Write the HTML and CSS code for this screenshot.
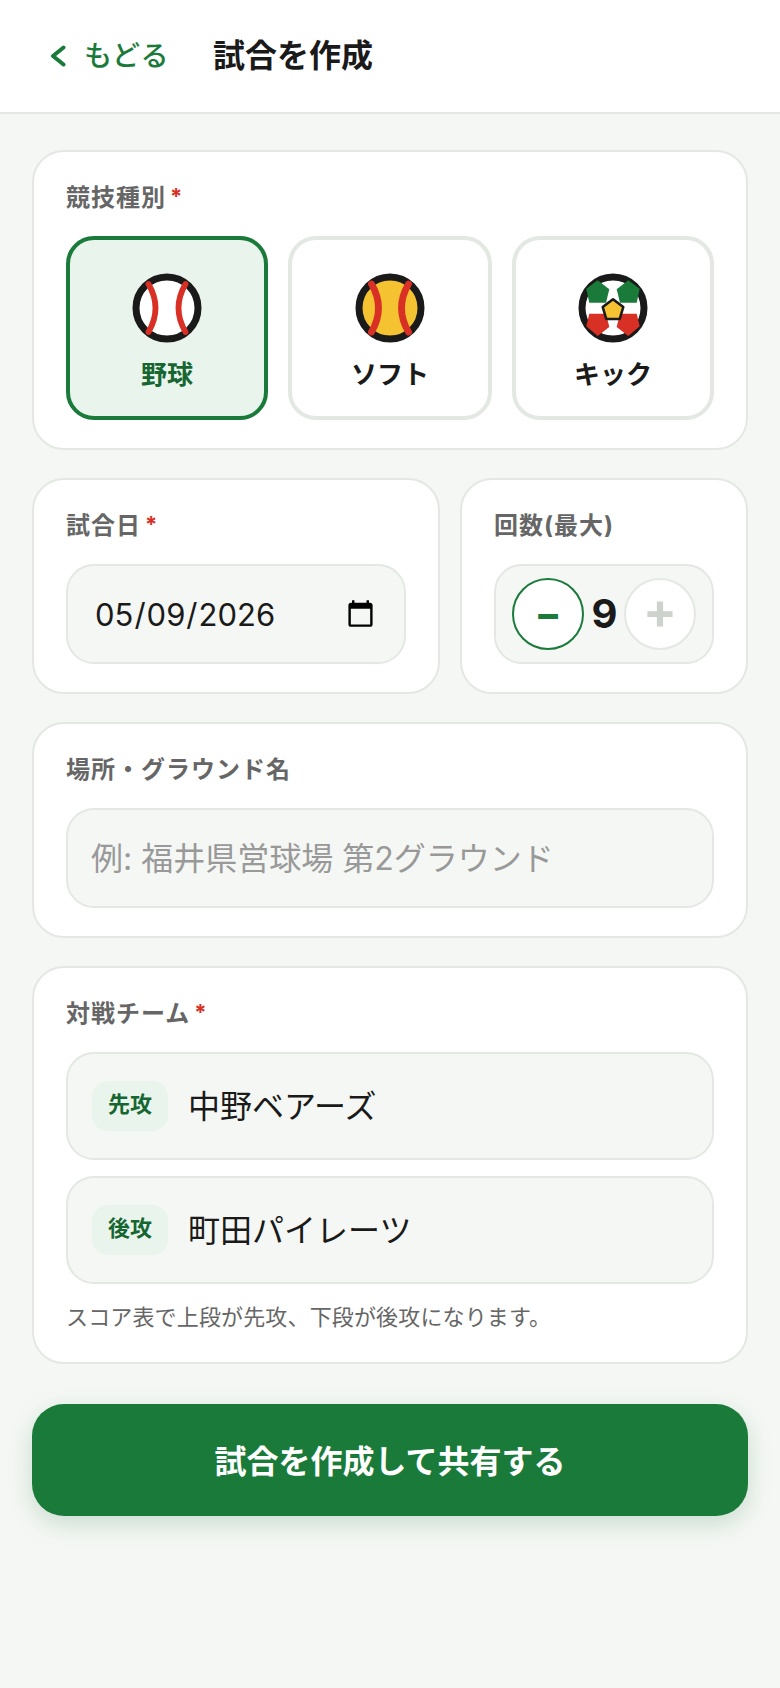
FILE: index.html
```html
<!DOCTYPE html>
<html lang="ja">
<head>
<meta charset="utf-8">
<title>試合を作成</title>
<link rel="stylesheet" href="styles.css">
</head>
<body>
<header class="topbar">
  <a class="back" href="#">
    <svg class="back-icon" viewBox="0 0 16 22" aria-hidden="true"><path d="M13.5 2.5 L3 11 L13.5 19.5"/></svg>
    <span>もどる</span>
  </a>
  <h1 class="title">試合を作成</h1>
</header>
<main class="form">
  <section class="card">
    <div class="label">競技種別<span class="req">*</span></div>
    <div class="sports">
      <button class="tile tile-on" type="button">
        <svg class="ball" viewBox="0 0 70 70" aria-hidden="true">
          <circle class="ring fill-white" cx="35" cy="35" r="31"/>
          <path class="seam" d="M16.5 11 Q30.5 35 16.5 59"/>
          <path class="seam" d="M53.5 11 Q39.5 35 53.5 59"/>
        </svg>
        <span>野球</span>
      </button>
      <button class="tile" type="button">
        <svg class="ball" viewBox="0 0 70 70" aria-hidden="true">
          <circle class="ring fill-yellow" cx="35" cy="35" r="31"/>
          <path class="seam seam-b" d="M16.5 11 Q30.5 35 16.5 59"/>
          <path class="seam seam-b" d="M53.5 11 Q39.5 35 53.5 59"/>
        </svg>
        <span>ソフト</span>
      </button>
      <button class="tile" type="button">
        <svg class="ball" viewBox="0 0 70 70" aria-hidden="true">
          <circle class="ring fill-white" cx="35" cy="35" r="31"/>
          <polygon class="pent-green" points="19.7,7.3 31.3,16.3 28,29.7 11.3,29.7 8.3,15.7"/>
          <polygon class="pent-green" points="50.3,7.3 38.7,16.3 42,29.7 58.7,29.7 61.7,15.7"/>
          <polygon class="pent-red" points="11.3,40.7 28,40.7 31.3,54 19.7,63 8.3,53.3"/>
          <polygon class="pent-red" points="58.7,40.7 42,40.7 38.7,54 50.3,63 61.7,53.3"/>
          <polygon class="pent-core" points="35,26.3 45.3,34 41.7,46 28.3,46 24.7,34"/>
        </svg>
        <span>キック</span>
      </button>
    </div>
  </section>

  <div class="row">
    <section class="card card-grow">
      <label class="label" for="date">試合日<span class="req">*</span></label>
      <input id="date" class="field field-date" type="date" value="2026-05-09">
    </section>
    <section class="card">
      <div class="label">回数(最大)</div>
      <div class="stepper">
        <button class="step step-on" type="button">−</button>
        <span class="count">9</span>
        <button class="step step-off" type="button">+</button>
      </div>
    </section>
  </div>

  <section class="card">
    <label class="label" for="place">場所・グラウンド名</label>
    <input id="place" class="field field-place" type="text" placeholder="例: 福井県営球場 第2グラウンド">
  </section>

  <section class="card">
    <div class="label">対戦チーム<span class="req">*</span></div>
    <div class="teams">
      <div class="team">
        <span class="badge">先攻</span>
        <input class="team-input" type="text" value="中野ベアーズ">
      </div>
      <div class="team">
        <span class="badge">後攻</span>
        <input class="team-input" type="text" value="町田パイレーツ">
      </div>
    </div>
    <p class="note">スコア表で上段が先攻、下段が後攻になります。</p>
  </section>

  <button class="submit" type="button">試合を作成して共有する</button>
</main>
</body>
</html>
```
FILE: styles.css
```css
* { box-sizing: border-box; }
html, body { margin: 0; padding: 0; }
body {
  min-height: 1688px;
  background: #f5f7f4;
  color: #1a1a1a;
  font-family: Inter, "Noto Sans CJK JP", sans-serif;
}
.topbar {
  display: flex;
  align-items: center;
  height: 114px;
  padding: 0 32px;
  background: #fff;
  border-bottom: 2px solid #e3e8e3;
}
.back {
  display: flex;
  align-items: center;
  gap: 18px;
  margin-left: 18px;
  color: #1a7a3a;
  font-size: 28px;
  font-weight: 500;
  letter-spacing: 0.5px;
  text-decoration: none;
}
.back span { padding-bottom: 4px; }
.back-icon { width: 16px; height: 22px; fill: none; stroke: #1a7a3a; stroke-width: 4; stroke-linecap: round; stroke-linejoin: round; }
.title { margin: 0 0 0 44px; font-size: 32px; font-weight: 700; line-height: 1.5; }
.form {
  display: flex;
  flex-direction: column;
  gap: 28px;
  padding: 36px 32px 0;
}
.card {
  padding: 28px 32px;
  background: #fff;
  border: 2px solid #e3e8e3;
  border-radius: 32px;
}
.card-grow { flex: 1; min-width: 0; }
.row { display: flex; gap: 20px; }
.label {
  display: block;
  height: 36px;
  margin-bottom: 20px;
  color: #666;
  font-size: 24px;
  font-weight: 700;
  line-height: 36px;
  letter-spacing: 1px;
}
.req { margin-left: 4px; color: #d93025; font-size: 22px; line-height: 0; vertical-align: 2px; }
.sports { display: grid; grid-template-columns: 1fr 204px 1fr; gap: 20px; }
.tile {
  display: flex;
  flex-direction: column;
  align-items: center;
  height: 184px;
  padding: 33px 0 0;
  background: #fff;
  border: 4px solid #e3e8e3;
  border-radius: 28px;
  color: #1a1a1a;
  font-family: inherit;
  font-size: 26px;
  font-weight: 700;
  line-height: 40px;
}
.tile-on { background: #e9f4ed; border-color: #1a7a3a; color: #156630; }
.ball { width: 70px; height: 70px; margin-bottom: 12px; }
.ring { stroke: #1a1a1a; stroke-width: 7; }
.fill-white { fill: #fff; }
.fill-yellow { fill: #f5c232; }
.seam { fill: none; stroke: #d93025; stroke-width: 5.8; stroke-linecap: round; }
.seam-b { stroke-width: 6.8; }
.pent-green { fill: #1a7a3a; }
.pent-red { fill: #d93025; }
.pent-core { fill: #f5c232; stroke: #1a1a1a; stroke-width: 2.6; stroke-linejoin: round; }
.field {
  display: block;
  width: 100%;
  height: 100px;
  padding: 0 24px;
  background: #f5f7f4;
  border: 2px solid #e3e8e3;
  border-radius: 28px;
  color: #1a1a1a;
  font-family: inherit;
  font-size: 32px;
  outline: none;
}
.field-date { padding: 0 26px; font-size: 31px; }
.field-place { padding-left: 23px; }
.field::placeholder { color: #999; opacity: 1; }
.stepper {
  display: flex;
  align-items: center;
  width: 220px;
  height: 100px;
  padding: 0 16px;
  background: #f5f7f4;
  border: 2px solid #e3e8e3;
  border-radius: 28px;
}
.step {
  width: 72px;
  height: 72px;
  flex: none;
  padding: 0;
  background: #fff;
  border-radius: 50%;
  font-family: inherit;
  font-weight: 700;
  line-height: 1;
}
.step-on { border: 2px solid #1a7a3a; color: #1a7a3a; font-size: 40px; padding-bottom: 1px; }
.step-off { border: 2px solid #e3e8e3; color: #cdd2cd; font-size: 50px; padding-bottom: 7px; }
.count { flex: 1; padding-left: 1px; text-align: center; font-size: 40px; font-weight: 700; line-height: 1; }
.teams { display: flex; flex-direction: column; gap: 16px; }
.team {
  display: flex;
  align-items: center;
  gap: 20px;
  height: 108px;
  padding: 0 24px;
  background: #f5f7f4;
  border: 2px solid #e3e8e3;
  border-radius: 28px;
}
.badge {
  flex: none;
  height: 50px;
  padding: 0 16px;
  background: #e9f4ed;
  border-radius: 16px;
  color: #156630;
  font-size: 22px;
  font-weight: 700;
  line-height: 46px;
}
.team-input {
  flex: 1;
  min-width: 0;
  padding: 0 0 4px;
  background: transparent;
  border: 0;
  color: #1a1a1a;
  font-family: inherit;
  font-size: 32px;
  outline: none;
}
.note { margin: 16px 0 0; color: #666; font-size: 22px; line-height: 34px; letter-spacing: 0.15px; }
.submit {
  height: 112px;
  margin-top: 12px;
  padding-bottom: 4px;
  background: #1a7a3a;
  border: 0;
  border-radius: 32px;
  box-shadow: 0 8px 24px rgba(26, 122, 58, 0.2);
  color: #fff;
  font-family: inherit;
  font-size: 32px;
  font-weight: 700;
}
```
